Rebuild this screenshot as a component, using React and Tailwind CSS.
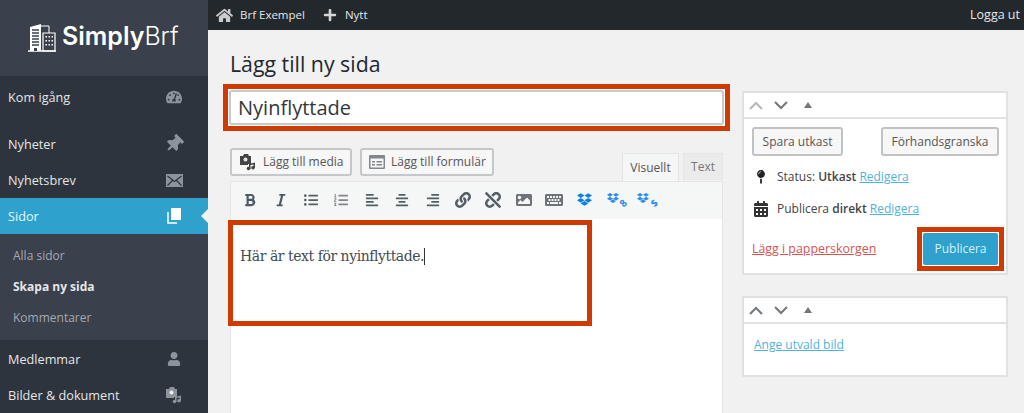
// App.jsx
import { FaHome, FaPlus, FaThumbtack, FaTachometerAlt, FaBold, FaItalic, FaListUl, FaListOl, FaAlignLeft, FaAlignCenter, FaAlignRight, FaLink, FaUnlink, FaImage, FaKeyboard, FaDropbox, FaUser, FaMapPin, FaCalendarAlt } from 'react-icons/fa';

const BuildingLogo = () => (
  <svg width="30" height="31" viewBox="0 0 30 31" fill="none" className="shrink-0">
    <path d="M1 30h28" stroke="#fff" strokeWidth="1.5" />
    <path d="M3 30V6l11-3v27z" fill="#fff" />
    <path d="M5 9h7M5 12h7M5 15h7M5 18h7M5 21h7M5 24h7" stroke="#3a404c" strokeWidth="1.3" />
    <path d="M7 27h3v3H7z" fill="#3a404c" />
    <path d="M14 5h8v7" stroke="#fff" strokeWidth="1" />
    <path d="M16 12h12v18H16z" stroke="#fff" strokeWidth="1.2" />
    <path d="M18.500 15h1.500v1.500h-1.500zM21.500 15H23v1.500h-1.500zM24.500 15H26v1.500h-1.500zM18.500 19h1.500v1.500h-1.500zM21.500 19H23v1.500h-1.500zM24.500 19H26v1.500h-1.500zM18.500 23h1.500v1.500h-1.500zM21.500 23H23v1.500h-1.500zM24.500 23H26v1.500h-1.500z" fill="#fff" />
  </svg>
);

const MediaIcon = ({ color = '#82878c', size = 18 }) => (
  <svg width={size} height={size} viewBox="0 0 18 18" className="shrink-0">
    <path d="M1 3h3l1-2h4l1 2h2v8H9v1H1z" fill={color} />
    <circle cx="6.500" cy="6.500" r="2" fill="#fff" fillOpacity="0.85" />
    <path d="M10 11l6-1.500V15h-1.500v-3.500L11.500 12v4H10z" fill={color} />
    <circle cx="9.500" cy="15.500" r="1.800" fill={color} />
    <circle cx="14" cy="14.800" r="1.800" fill={color} />
  </svg>
);

const MailIcon = () => (
  <svg width="17" height="13" viewBox="0 0 17 13" className="shrink-0">
    <rect width="17" height="13" fill="#8d939a" />
    <path d="M1.500 2l7 5.500 7-5.500M1.500 11.500l5-5M15.500 11.500l-5-5" stroke="#2d343d" strokeWidth="1.200" fill="none" />
  </svg>
);

const PagesIcon = () => (
  <svg width="14" height="16" viewBox="0 0 14 16" className="shrink-0">
    <path d="M4 0h10v12H4z" fill="#fff" />
    <path d="M1 4v11h9" stroke="#fff" strokeWidth="1.500" fill="none" />
  </svg>
);

const FormIcon = () => (
  <svg width="16" height="14" viewBox="0 0 16 14" className="shrink-0">
    <rect width="16" height="14" rx="1" fill="#82878c" />
    <rect x="1.500" y="3.500" width="13" height="9" fill="#f7f7f7" />
    <path d="M3 6h3v1.500H3zM7.500 6H13v1.500H7.500zM3 9h3v1.500H3zM7.500 9H13v1.500H7.500z" fill="#82878c" />
  </svg>
);

const ChevUp = ({ color }) => (
  <svg width="14" height="9" viewBox="0 0 14 9" fill="none"><path d="M1 8l6-6 6 6" stroke={color} strokeWidth="2" /></svg>
);

const ChevDown = () => (
  <svg width="14" height="9" viewBox="0 0 14 9" fill="none"><path d="M1 1l6 6 6-6" stroke="#72777c" strokeWidth="2" /></svg>
);

const BoxHeader = ({ upColor }) => (
  <div className="h-[26px] flex items-center pl-[5px] border-b-2 border-[#e1e1e1]">
    <ChevUp color={upColor} />
    <span className="ml-[11px]"><ChevDown /></span>
    <span className="ml-[16px] w-0 h-0 border-x-[4px] border-x-transparent border-b-[6px] border-b-[#72777c]" />
  </div>
);

const MenuRow = ({ label, icon, className = 'h-[36px]' }) => (
  <div className={`flex items-center justify-between pl-[8px] pr-[25px] text-[12.7px] text-[#e4e6e8] ${className}`}>
    <span className="pt-[2px]">{label}</span>
    <span className="w-[18px] flex justify-center text-[#8d939a]">{icon}</span>
  </div>
);

const Sidebar = () => (
  <aside className="w-[208px] shrink-0 h-full bg-[#2d343d] flex flex-col">
    <div className="h-[76px] bg-[#3a404c] flex items-center pl-[27px] pb-[3px]">
      <BuildingLogo />
      <span className="ml-[5px] text-[25px] text-white font-['Inter',sans-serif]">
        <span className="font-semibold">Simply</span><span className="font-light">Brf</span>
      </span>
    </div>
    <div className="pt-[3px] h-[122px] flex flex-col">
      <MenuRow label="Kom igång" icon={<FaTachometerAlt size={16} />} className="h-[36px]" />
      <MenuRow label="Nyheter" icon={<FaThumbtack size={18} className="rotate-45" />} className="h-[36px] mt-[11px]" />
      <MenuRow label="Nyhetsbrev" icon={<MailIcon />} className="h-[36px]" />
    </div>
    <div className="relative h-[36px] bg-[#2ea2cc] flex items-center justify-between pl-[8px] pr-[25px] text-[12.7px] text-[#e6f5fa]">
      <span className="pt-[2px]">Sidor</span>
      <span className="w-[18px] flex justify-center"><PagesIcon /></span>
      <span className="absolute right-0 top-[11px] w-0 h-0 border-y-[7px] border-y-transparent border-r-[7px] border-r-[#f1f1f1]" />
    </div>
    <div className="h-[106px] bg-[#3a404c] pl-[13px] pt-[12px] text-[12px] flex flex-col gap-[11px]">
      <span className="text-[#a5a9b0] leading-[20px]">Alla sidor</span>
      <span className="text-[#e4e6e8] font-bold leading-[20px]">Skapa ny sida</span>
      <span className="text-[#a5a9b0] leading-[20px]">Kommentarer</span>
    </div>
    <MenuRow label="Medlemmar" icon={<FaUser size={14} />} className="h-[38px]" />
    <MenuRow label="Bilder & dokument" icon={<MediaIcon color="#8d939a" />} className="h-[34px]" />
  </aside>
);

const TopBar = () => (
  <div className="h-[30px] bg-[#23282d] flex items-center text-[11.500px] text-[#e4e6e8] pl-[8px] pr-[4px]">
    <FaHome size={17} className="text-[#c9cbcd]" />
    <span className="ml-[7px]">Brf Exempel</span>
    <FaPlus size={14} className="ml-[18px] text-[#d5d6d7]" />
    <span className="ml-[8px]">Nytt</span>
    <span className="ml-auto text-[12.500px]">Logga ut</span>
  </div>
);

const MediaButton = ({ icon, label, className }) => (
  <div className={`h-[28px] flex items-center gap-[6px] bg-[#f7f7f7] border-2 border-[#c5c8cb] rounded-[3px] text-[12px] text-[#555] ${className}`}>
    {icon}
    <span>{label}</span>
  </div>
);

const ToolIcon = ({ children }) => (
  <span className="flex justify-center w-[30.400px]">{children}</span>
);

const DropboxTag = ({ mark }) => (
  <span className="relative flex -ml-[4px]">
    <FaDropbox size={12} className="text-[#2a8de9] -mt-[4px]" />
    <span className="absolute -right-[7px] top-[2px] text-[10px] leading-none font-bold text-[#2a8de9] -rotate-45">{mark}</span>
  </span>
);

const Toolbar = () => (
  <div className="h-[38px] bg-[#f5f6f6] border-x border-t border-[#e5e5e5] flex items-center pl-[4px] pb-[2px] text-[#555d66]">
    <ToolIcon><FaBold size={14} className="text-[#4d5a68]" /></ToolIcon>
    <ToolIcon><FaItalic size={14} className="text-[#4d5a68]" /></ToolIcon>
    <ToolIcon><FaListUl size={14} /></ToolIcon>
    <ToolIcon><FaListOl size={14} className="text-[#80868c]" /></ToolIcon>
    <ToolIcon><FaAlignLeft size={14} /></ToolIcon>
    <ToolIcon><FaAlignCenter size={14} /></ToolIcon>
    <ToolIcon><FaAlignRight size={14} /></ToolIcon>
    <ToolIcon><FaLink size={16} /></ToolIcon>
    <ToolIcon><FaUnlink size={16} /></ToolIcon>
    <ToolIcon><FaImage size={16} className="text-[#6d7379]" /></ToolIcon>
    <ToolIcon><FaKeyboard size={18} className="text-[#6d7379]" /></ToolIcon>
    <ToolIcon><FaDropbox size={15} className="text-[#0d7ee8]" /></ToolIcon>
    <ToolIcon><DropboxTag mark="8" /></ToolIcon>
    <ToolIcon><DropboxTag mark="$" /></ToolIcon>
  </div>
);

const Editor = () => (
  <div className="w-[493px] shrink-0">
    <h1 className="text-[21.300px] leading-[28px] text-[#23282d] mt-[20px]">Lägg till ny sida</h1>
    <div className="-mx-[7px] mt-[6px] h-[47px] border-[5px] border-[#cf3a02] bg-white p-[1px]">
      <div className="h-full bg-white border-2 border-[#c9c9c9] rounded-[3px] flex items-center pl-[7px] text-[20px] text-[#32373c]">
        Nyinflyttade
      </div>
    </div>
    <div className="mt-[17px] h-[33px] flex items-start">
      <MediaButton icon={<MediaIcon color="#444" />} label="Lägg till media" className="w-[122px] pl-[7px]" />
      <MediaButton icon={<FormIcon />} label="Lägg till formulär" className="w-[134px] ml-[8px] pl-[7px]" />
      <div className="ml-auto mt-[5px] h-[28px] w-[57px] -mb-[2px] bg-[#f5f6f6] border-x border-t border-[#e5e5e5] flex items-center justify-center text-[12px] text-[#555]">Visuellt</div>
      <div className="ml-[4px] mt-[5px] h-[27px] w-[40px] bg-[#ebebeb] border-x border-t border-[#e5e5e5] flex items-center justify-center text-[12px] text-[#777]">Text</div>
    </div>
    <Toolbar />
    <div className="relative h-[194px] bg-white border-x border-[#e5e5e5]">
      <div className="absolute -left-[3px] top-[1px] w-[364px] h-[106px] border-[5px] border-[#cf3a02]" />
      <p className="pl-[9px] pt-[27px] text-[14px] leading-[20px] text-[#444b52] font-['DejaVu_Serif',serif] tracking-[-0.45px] flex items-center">
        Här är text för nyinflyttade.<span className="inline-block w-[1px] h-[17px] bg-[#333]" />
      </p>
    </div>
  </div>
);

const PublishBox = () => (
  <div className="bg-white border-2 border-[#e1e1e1] h-[184px] flex flex-col">
    <BoxHeader upColor="#b4b9be" />
    <div className="flex justify-between pl-[8px] pr-[7px] pt-[8px]">
      <div className="w-[91px] h-[29px] flex items-center justify-center bg-[#f7f7f7] border-2 border-[#bfc3c6] rounded-[3px] text-[12px] text-[#555]">Spara utkast</div>
      <div className="w-[118px] h-[29px] flex items-center justify-center bg-[#f7f7f7] border-2 border-[#bfc3c6] rounded-[3px] text-[12px] text-[#555]">Förhandsgranska</div>
    </div>
    <div className="flex items-center pl-[10px] mt-[11px] h-[20px] text-[12px] text-[#444]">
      <FaMapPin size={14} className="text-[#222]" />
      <span className="ml-[9px]">Status: <span className="font-semibold">Utkast</span> <a className="text-[#4fb3d9] underline">Redigera</a></span>
    </div>
    <div className="flex items-center pl-[9px] mt-[12px] h-[20px] text-[12px] text-[#444]">
      <FaCalendarAlt size={16} className="text-[#333]" />
      <span className="ml-[8px]">Publicera <span className="font-semibold">direkt</span> <a className="text-[#4fb3d9] underline">Redigera</a></span>
    </div>
    <div className="flex items-center justify-between pl-[8px] pr-[2px] mt-[8px]">
      <a className="text-[12.400px] text-[#d9534f] underline">Lägg i papperskorgen</a>
      <div className="w-[87px] h-[44px] border-[5px] border-[#cf3a02] p-[1px] bg-white">
        <div className="h-full bg-[#2ea2cc] rounded-[2px] flex items-center justify-center text-[12px] text-[#d9f0f8]">Publicera</div>
      </div>
    </div>
  </div>
);

const ImageBox = () => (
  <div className="bg-white border-2 border-[#e1e1e1] h-[81px] mt-[21px]">
    <BoxHeader upColor="#72777c" />
    <a className="block pl-[10px] pt-[12px] text-[12px] text-[#4fb3d9] underline">Ange utvald bild</a>
  </div>
);

const App = () => (
  <div className="w-[1024px] h-[413px] overflow-hidden flex bg-[#f1f1f1] font-['Open_Sans',sans-serif]">
    <Sidebar />
    <div className="flex-1 flex flex-col min-w-0">
      <TopBar />
      <div className="flex pl-[22px]">
        <Editor />
        <div className="w-[266px] ml-[19px] pt-[61px]">
          <PublishBox />
          <ImageBox />
        </div>
      </div>
    </div>
  </div>
);

export default App;
